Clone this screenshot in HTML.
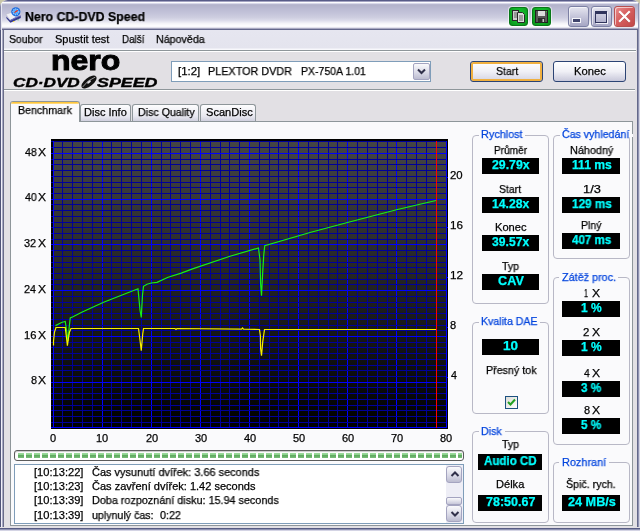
<!DOCTYPE html><html><head><meta charset="utf-8"><title>Nero CD-DVD Speed</title><style>
*{box-sizing:border-box;margin:0;padding:0}
html,body{width:640px;height:531px;overflow:hidden;background:#e2e0e4}
body{font-family:"Liberation Sans",sans-serif;font-size:11px;color:#000;position:relative}
.abs{position:absolute}
.t{position:absolute;white-space:nowrap;line-height:1;transform-origin:0 0;will-change:transform;-webkit-text-stroke:0.25px}
.grp{position:absolute;border:1px solid #b8b8c6;border-radius:4px}
.gbg{position:absolute;background:#fafafc;height:3px}
.vb{position:absolute;background:#000;height:16px}
</style></head><body>
<div class="abs" style="left:0;top:0;width:640px;height:10px;background:#c9c6a8"></div>
<div class="abs" style="left:0;top:0;width:640px;height:531px;border-radius:7px 7px 0 0;overflow:hidden;background:#e2e0e4">
<div class="abs" style="left:0;top:0;width:640px;height:30px;background:linear-gradient(to bottom,#585c88 0.5px,#a4a4c2 1.5px,#fcfcff 2.5px,#dadaea 3.5px,#b8b8d0 4.5px,#b4b4cc 5.5px,#bcbcd4 9.5px,#c4c4da 13.5px,#ceceE0 17.5px,#dcdcea 20.5px,#f4f4f8 23.5px,#fcfcfe 25.5px,#fafafc 26.5px,#e4e4ee 27.5px,#a8a8c0 28.5px,#64688c 29.5px);border-radius:8px 8px 0 0"></div>
<div class="abs" style="left:0;top:3px;width:2px;height:27px;background:linear-gradient(to right,#8688a8 0,#8688a8 1px,#e8e8f2 1px)"></div>
<div class="abs" style="left:638px;top:3px;width:2px;height:27px;background:linear-gradient(to left,#d4d4e4 0,#d4d4e4 1px,#9094b2 1px)"></div>
<div class="abs" style="left:0;top:30px;width:4px;height:501px;background:linear-gradient(to right,#505478 0,#505478 1px,#f0f0f8 1px,#f0f0f8 2px,#a8a8c4 2px,#a8a8c4 3px,#686c88 3px)"></div>
<div class="abs" style="left:636px;top:30px;width:4px;height:501px;background:linear-gradient(to left,#d4d4e4 0,#d4d4e4 1px,#9094b2 1px,#9094b2 2px,#64688a 2px,#64688a 3px,#e2e0e4 3px)"></div>
<div class="abs" style="left:0;top:527px;width:640px;height:4px;background:linear-gradient(to top,#d4d4e4 0,#d4d4e4 1px,#9094b2 1px,#9094b2 2px,#585c84 2px,#585c84 3px,#e2e0e4 3px)"></div>
</div>
<svg class="abs" style="left:4px;top:5px" width="20" height="20" viewBox="4 5 20 20"><path d="M6 14.2 L11.5 12.4 L16.5 16.8 L10 20.2 Z" fill="#f0f0f6" stroke="#b8b8c8" stroke-width=".5"/><path d="M6.2 16.4 L10 20.3 L20.6 15.6 L20.8 18 L10.4 22.8 L6.6 18.6 Z" fill="#34388c"/><path d="M10 20.2 L16.5 16.8 L20.6 15.4 L20.6 16 L10.2 21 Z" fill="#6a70c0"/><circle cx="15.8" cy="11.8" r="4.6" fill="#1c6ce0"/><circle cx="15.8" cy="11.8" r="3" fill="#58a8f8"/><circle cx="15.8" cy="11.8" r="3" fill="none" stroke="#d8ecff" stroke-width=".9" stroke-dasharray="1 1.2"/><path d="M14.6 12.6 L17.8 10.6 L16 11 Z" fill="#f03018" stroke="#f03018" stroke-width=".8"/><rect x="13" y="21" width="1.3" height="1" fill="#e8d020"/><rect x="17.6" y="19.4" width="1" height=".9" fill="#30b040"/></svg>
<div class="t" style="left:25.26px;top:10.92px;font-size:12.5px;transform:scaleX(0.9875);font-weight:bold;">Nero CD-DVD Speed</div>
<div class="abs" style="left:509px;top:7px;width:19px;height:19px;border:1px solid #087818;border-radius:3px;background:radial-gradient(ellipse at 50% 40%,#18c830 0,#10b028 55%,#0a8c18 100%);box-shadow:0 0 0 1px rgba(255,255,255,.55)"><svg class="abs" style="left:-1px;top:-1px" width="19" height="19" viewBox="509 7 19 19"><rect x="512.5" y="10.5" width="6" height="10" fill="#cfcfcf" stroke="#282828" stroke-width="1"/><path d="M514 13h3M514 15h3M514 17h3" stroke="#606060" stroke-width="1"/><path d="M517.5 12.5 h5 l2 2 v8 h-7 z" fill="#dcdcdc" stroke="#282828" stroke-width="1"/><path d="M519 16h4M519 18h4M519 20h4" stroke="#606060" stroke-width="1"/></svg></div>
<div class="abs" style="left:532px;top:7px;width:19px;height:19px;border:1px solid #087818;border-radius:3px;background:radial-gradient(ellipse at 50% 40%,#18c830 0,#10b028 55%,#0a8c18 100%);box-shadow:0 0 0 1px rgba(255,255,255,.55)"><svg class="abs" style="left:-1px;top:-1px" width="19" height="19" viewBox="532 7 19 19"><rect x="535.5" y="10.5" width="12" height="12" fill="#585858" stroke="#202020" stroke-width="1"/><rect x="538" y="11" width="7" height="5" fill="#dcdcdc"/><rect x="538" y="18" width="7" height="4.5" fill="#2c2c2c"/><rect x="542.5" y="19" width="1.6" height="3" fill="#c8c8c8"/><rect x="546" y="11.2" width="1" height="1" fill="#30e030"/></svg></div>
<div class="abs" style="left:568px;top:6px;width:21px;height:21px;border:1px solid #7c80a4;border-radius:3px;background:linear-gradient(to bottom,#e6e6f0 0,#c8c8dc 45%,#a6a6c4 100%);box-shadow:inset 1px 1px 0 rgba(255,255,255,.6)"><div class="abs" style="left:3px;top:11px;width:9px;height:5px;background:#40446c;border:1px solid #f4f4fa"></div></div>
<div class="abs" style="left:591px;top:6px;width:21px;height:21px;border:1px solid #7c80a4;border-radius:3px;background:linear-gradient(to bottom,#e6e6f0 0,#c8c8dc 45%,#a6a6c4 100%);box-shadow:inset 1px 1px 0 rgba(255,255,255,.6)"><div class="abs" style="left:3px;top:4px;width:12px;height:12px;border:1px solid #30345c;border-top-width:3px;box-shadow:1px 1px 0 #f0f0f8"></div></div>
<div class="abs" style="left:614px;top:6px;width:21px;height:21px;border:1px solid #b85050;border-radius:3px;background:linear-gradient(135deg,#e89090 0,#d86060 45%,#c04848 100%);box-shadow:inset 1px 1px 0 rgba(255,255,255,.6)"><svg class="abs" style="left:0;top:0" width="19" height="19"><path d="M5.5 6 L13.5 14 M13.5 6 L5.5 14" stroke="#702020" stroke-width="2.2" stroke-linecap="square" opacity=".5"/><path d="M5 5 L14 14 M14 5 L5 14" stroke="#fff" stroke-width="2.2" stroke-linecap="square"/></svg></div>
<div class="abs" style="left:4px;top:30px;width:632px;height:20px;background:linear-gradient(to bottom,#e6e6f0 0,#e4e4ee 18px,#f8f8fc 19px)"></div>
<div class="abs" style="left:4px;top:50px;width:632px;height:1px;background:#8e969a"></div>
<div class="abs" style="left:4px;top:51px;width:632px;height:1px;background:#fff"></div>
<div class="t" style="left:9.28px;top:33.69px;font-size:11px;transform:scaleX(0.9496);">Soubor</div>
<div class="t" style="left:55.40px;top:33.69px;font-size:11px;transform:scaleX(0.9986);">Spustit test</div>
<div class="t" style="left:122.12px;top:33.69px;font-size:11px;transform:scaleX(0.8948);">Další</div>
<div class="t" style="left:156.35px;top:33.69px;font-size:11px;transform:scaleX(0.9706);">Nápověda</div>
<div class="abs" style="left:4px;top:89px;width:631px;height:1px;background:#8e969a"></div>
<div class="abs" style="left:4px;top:90px;width:631px;height:1px;background:#fff"></div>
<div class="t" style="left:51.20px;top:46.90px;font-size:28px;transform:scaleX(1.1414);font-weight:bold;-webkit-text-stroke:1px #000;">nero</div>
<div class="t" style="left:13.18px;top:76.20px;font-size:13px;transform:scaleX(1.3199);font-weight:bold;font-style:italic;-webkit-text-stroke:0.4px #000;">CD·DVD</div>
<div class="t" style="left:97.33px;top:76.20px;font-size:13px;transform:scaleX(1.3714);font-weight:bold;font-style:italic;-webkit-text-stroke:0.4px #000;">SPEED</div>
<svg class="abs" style="left:80px;top:74px" width="18" height="16" viewBox="0 0 18 16"><g transform="rotate(-38 9 8)"><ellipse cx="9" cy="8" rx="9" ry="4.2" fill="#111"/><ellipse cx="9" cy="8" rx="2.2" ry="1" fill="#e2e0e4"/><path d="M1 8 Q9 5.5 17 8" stroke="#e2e0e4" stroke-width=".6" fill="none"/></g></svg>
<div class="abs" style="left:171px;top:61px;width:260px;height:21px;border:1px solid #7f9db9;background:#fff"></div>
<div class="t" style="left:177.97px;top:66.19px;font-size:11px;transform:scaleX(1.0375);">[1:2]</div>
<div class="t" style="left:207.89px;top:66.19px;font-size:11px;transform:scaleX(0.9821);">PLEXTOR DVDR</div>
<div class="t" style="left:301.16px;top:66.19px;font-size:11px;transform:scaleX(0.9549);">PX-750A 1.01</div>
<div class="abs" style="left:413px;top:63px;width:17px;height:17px;border:1px solid #a4a4c0;border-radius:2px;background:linear-gradient(to bottom,#fafafc,#d8d8e6 60%,#bcbcd0)"><svg width="15" height="15"><path d="M4 5.5 L7.5 9 L11 5.5" fill="none" stroke="#30304a" stroke-width="2"/></svg></div>
<div class="abs" style="left:470px;top:61px;width:73px;height:21px;border:1px solid #2c4474;border-radius:3px;background:linear-gradient(to bottom,#fff,#f0f0f6 50%,#d4d4e2);box-shadow:inset 0 0 0 2px #f0b040"></div>
<div class="t" style="left:495.52px;top:66.29px;font-size:11px;transform:scaleX(0.9547);">Start</div>
<div class="abs" style="left:553px;top:61px;width:73px;height:21px;border:1px solid #2c4474;border-radius:3px;background:linear-gradient(to bottom,#fff,#f0f0f6 50%,#c8c8da)"></div>
<div class="t" style="left:573.81px;top:66.29px;font-size:11px;transform:scaleX(1.0191);">Konec</div>
<div class="abs" style="left:10px;top:121px;width:623px;height:405px;border:1px solid #8e969a;background:#fafafc"></div>
<div class="abs" style="left:80px;top:104px;width:51px;height:17px;border:1px solid #8e969a;border-bottom:0;border-radius:3px 3px 0 0;background:linear-gradient(to bottom,#fdfdfe,#e8e8f0 70%,#d0d0de)"></div>
<div class="abs" style="left:132px;top:104px;width:67px;height:17px;border:1px solid #8e969a;border-bottom:0;border-radius:3px 3px 0 0;background:linear-gradient(to bottom,#fdfdfe,#e8e8f0 70%,#d0d0de)"></div>
<div class="abs" style="left:200px;top:104px;width:56px;height:17px;border:1px solid #8e969a;border-bottom:0;border-radius:3px 3px 0 0;background:linear-gradient(to bottom,#fdfdfe,#e8e8f0 70%,#d0d0de)"></div>
<div class="abs" style="left:10px;top:101px;width:70px;height:21px;border:1px solid #8e969a;border-bottom:0;border-radius:3px 3px 0 0;background:#fafafc;overflow:hidden"><div class="abs" style="left:0;top:-1px;width:100%;height:3px;background:linear-gradient(to bottom,#e68b2c 0,#e68b2c 1px,#ffc73c 1px,#ffc73c 2px,#ffd878 2px)"></div></div>
<div class="t" style="left:17.75px;top:105.19px;font-size:11px;transform:scaleX(0.9686);">Benchmark</div>
<div class="t" style="left:84.03px;top:107.49px;font-size:11px;transform:scaleX(1.0000);">Disc Info</div>
<div class="t" style="left:137.75px;top:107.49px;font-size:11px;transform:scaleX(0.9662);">Disc Quality</div>
<div class="t" style="left:205.90px;top:107.49px;font-size:11px;transform:scaleX(1.0055);">ScanDisc</div>
<svg width="398" height="291" viewBox="51 139 398 291" style="position:absolute;left:51px;top:139px">
<defs><linearGradient id="bg" x1="0" y1="0" x2="0" y2="1"><stop offset="0" stop-color="#454545"/><stop offset="1" stop-color="#000000"/></linearGradient></defs>
<rect x="51" y="139" width="397" height="290" fill="#000"/>
<rect x="53" y="141" width="394" height="287" fill="url(#bg)"/>
<g shape-rendering="crispEdges">
<rect x="53" y="141" width="1" height="287" fill="#0000ff"/>
<rect x="62" y="141" width="1" height="287" fill="#00009a"/>
<rect x="72" y="141" width="1" height="287" fill="#00009a"/>
<rect x="82" y="141" width="1" height="287" fill="#00009a"/>
<rect x="92" y="141" width="1" height="287" fill="#00009a"/>
<rect x="102" y="141" width="1" height="287" fill="#0000ff"/>
<rect x="111" y="141" width="1" height="287" fill="#00009a"/>
<rect x="121" y="141" width="1" height="287" fill="#00009a"/>
<rect x="131" y="141" width="1" height="287" fill="#00009a"/>
<rect x="141" y="141" width="1" height="287" fill="#00009a"/>
<rect x="151" y="141" width="1" height="287" fill="#0000ff"/>
<rect x="161" y="141" width="1" height="287" fill="#00009a"/>
<rect x="170" y="141" width="1" height="287" fill="#00009a"/>
<rect x="180" y="141" width="1" height="287" fill="#00009a"/>
<rect x="190" y="141" width="1" height="287" fill="#00009a"/>
<rect x="200" y="141" width="1" height="287" fill="#0000ff"/>
<rect x="210" y="141" width="1" height="287" fill="#00009a"/>
<rect x="220" y="141" width="1" height="287" fill="#00009a"/>
<rect x="229" y="141" width="1" height="287" fill="#00009a"/>
<rect x="239" y="141" width="1" height="287" fill="#00009a"/>
<rect x="249" y="141" width="1" height="287" fill="#0000ff"/>
<rect x="259" y="141" width="1" height="287" fill="#00009a"/>
<rect x="269" y="141" width="1" height="287" fill="#00009a"/>
<rect x="278" y="141" width="1" height="287" fill="#00009a"/>
<rect x="288" y="141" width="1" height="287" fill="#00009a"/>
<rect x="298" y="141" width="1" height="287" fill="#0000ff"/>
<rect x="308" y="141" width="1" height="287" fill="#00009a"/>
<rect x="318" y="141" width="1" height="287" fill="#00009a"/>
<rect x="328" y="141" width="1" height="287" fill="#00009a"/>
<rect x="337" y="141" width="1" height="287" fill="#00009a"/>
<rect x="347" y="141" width="1" height="287" fill="#0000ff"/>
<rect x="357" y="141" width="1" height="287" fill="#00009a"/>
<rect x="367" y="141" width="1" height="287" fill="#00009a"/>
<rect x="377" y="141" width="1" height="287" fill="#00009a"/>
<rect x="387" y="141" width="1" height="287" fill="#00009a"/>
<rect x="396" y="141" width="1" height="287" fill="#0000ff"/>
<rect x="406" y="141" width="1" height="287" fill="#00009a"/>
<rect x="416" y="141" width="1" height="287" fill="#00009a"/>
<rect x="426" y="141" width="1" height="287" fill="#00009a"/>
<rect x="436" y="141" width="1" height="287" fill="#00009a"/>
<rect x="446" y="141" width="1" height="287" fill="#0000ff"/>
<rect x="51" y="427" width="396" height="1" fill="#0000ff"/>
<rect x="51" y="422" width="396" height="1" fill="#00009a"/>
<rect x="51" y="416" width="396" height="1" fill="#00009a"/>
<rect x="51" y="410" width="396" height="1" fill="#00009a"/>
<rect x="51" y="405" width="396" height="1" fill="#00009a"/>
<rect x="51" y="399" width="396" height="1" fill="#00009a"/>
<rect x="51" y="393" width="396" height="1" fill="#00009a"/>
<rect x="51" y="387" width="396" height="1" fill="#00009a"/>
<rect x="51" y="382" width="396" height="1" fill="#0000ff"/>
<rect x="51" y="376" width="396" height="1" fill="#00009a"/>
<rect x="51" y="370" width="396" height="1" fill="#00009a"/>
<rect x="51" y="365" width="396" height="1" fill="#00009a"/>
<rect x="51" y="359" width="396" height="1" fill="#00009a"/>
<rect x="51" y="353" width="396" height="1" fill="#00009a"/>
<rect x="51" y="347" width="396" height="1" fill="#00009a"/>
<rect x="51" y="342" width="396" height="1" fill="#00009a"/>
<rect x="51" y="336" width="396" height="1" fill="#0000ff"/>
<rect x="51" y="330" width="396" height="1" fill="#00009a"/>
<rect x="51" y="325" width="396" height="1" fill="#00009a"/>
<rect x="51" y="319" width="396" height="1" fill="#00009a"/>
<rect x="51" y="313" width="396" height="1" fill="#00009a"/>
<rect x="51" y="307" width="396" height="1" fill="#00009a"/>
<rect x="51" y="302" width="396" height="1" fill="#00009a"/>
<rect x="51" y="296" width="396" height="1" fill="#00009a"/>
<rect x="51" y="290" width="396" height="1" fill="#0000ff"/>
<rect x="51" y="284" width="396" height="1" fill="#00009a"/>
<rect x="51" y="279" width="396" height="1" fill="#00009a"/>
<rect x="51" y="273" width="396" height="1" fill="#00009a"/>
<rect x="51" y="267" width="396" height="1" fill="#00009a"/>
<rect x="51" y="262" width="396" height="1" fill="#00009a"/>
<rect x="51" y="256" width="396" height="1" fill="#00009a"/>
<rect x="51" y="250" width="396" height="1" fill="#00009a"/>
<rect x="51" y="244" width="396" height="1" fill="#0000ff"/>
<rect x="51" y="239" width="396" height="1" fill="#00009a"/>
<rect x="51" y="233" width="396" height="1" fill="#00009a"/>
<rect x="51" y="227" width="396" height="1" fill="#00009a"/>
<rect x="51" y="222" width="396" height="1" fill="#00009a"/>
<rect x="51" y="216" width="396" height="1" fill="#00009a"/>
<rect x="51" y="210" width="396" height="1" fill="#00009a"/>
<rect x="51" y="204" width="396" height="1" fill="#00009a"/>
<rect x="51" y="199" width="396" height="1" fill="#0000ff"/>
<rect x="51" y="193" width="396" height="1" fill="#00009a"/>
<rect x="51" y="187" width="396" height="1" fill="#00009a"/>
<rect x="51" y="182" width="396" height="1" fill="#00009a"/>
<rect x="51" y="176" width="396" height="1" fill="#00009a"/>
<rect x="51" y="170" width="396" height="1" fill="#00009a"/>
<rect x="51" y="164" width="396" height="1" fill="#00009a"/>
<rect x="51" y="159" width="396" height="1" fill="#00009a"/>
<rect x="51" y="153" width="396" height="1" fill="#0000ff"/>
<rect x="51" y="147" width="396" height="1" fill="#00009a"/>
<rect x="51" y="141" width="396" height="1" fill="#00009a"/>
<rect x="53" y="141" width="1" height="287" fill="#0000ff"/>
<rect x="446" y="141" width="1" height="287" fill="#0000ff"/>
<rect x="51" y="427" width="396" height="1" fill="#0000ff"/>
<rect x="447" y="377" width="1" height="1" fill="#0000ff"/>
<rect x="447" y="327" width="1" height="1" fill="#0000ff"/>
<rect x="447" y="277" width="1" height="1" fill="#0000ff"/>
<rect x="447" y="227" width="1" height="1" fill="#0000ff"/>
<rect x="447" y="177" width="1" height="1" fill="#0000ff"/>
<rect x="448" y="139" width="1" height="291" fill="#ffffff"/>
<rect x="51" y="429" width="398" height="1" fill="#ffffff"/>
<rect x="436" y="141" width="1" height="287" fill="#ff0000"/>
</g>
<polyline fill="none" stroke="#18f018" stroke-width="1.2" points="55.5,325.6 61.5,322.5 65.25,321.5 66.5,330 68,341 69.2,327 70.25,318 73,316.8 81.75,312.25 103,302.5 110,299.75 138,288.75 140,310 141.25,317.5 142.5,295 143.5,286.25 147,284.3 151.25,283 157,282.3 168.1,277.3 181.25,273.1 192.5,268.9 230,256.25 258.5,248 260,260 260.6,283.75 261.5,295.6 262.75,271.25 263.75,255 264.75,245.6 310,232.5 347.5,222.5 397.5,209.5 436,200.5"/>
<polyline fill="none" stroke="#f8f000" stroke-width="1.2" points="53.5,345.6 53.5,341 54.5,332 56,327.5 65.25,327.5 66.3,336 67.4,345.6 68.5,338 69.5,332 71,328.5 138.5,328.5 140,340 141.25,350.6 142.75,333.75 143.5,328.5 175,328.5 176,329.5 177,328.5 241.5,329.2 242.5,328 243.5,329.2 259.5,329.5 260.4,336 260.6,348.5 261.5,355.75 262.75,341.6 263.75,334.75 264.5,329.5 436,329.5"/>
</svg>
<div class="t" style="left:24.56px;top:146.53px;font-size:11px;transform:scaleX(0.9720);">48</div>
<div class="t" style="left:38.48px;top:146.53px;font-size:11px;transform:scaleX(1.0982);">X</div>
<div class="t" style="left:24.56px;top:192.29px;font-size:11px;transform:scaleX(0.9720);">40</div>
<div class="t" style="left:38.48px;top:192.29px;font-size:11px;transform:scaleX(1.0982);">X</div>
<div class="t" style="left:24.43px;top:238.05px;font-size:11px;transform:scaleX(0.9934);">32</div>
<div class="t" style="left:38.48px;top:238.05px;font-size:11px;transform:scaleX(1.0982);">X</div>
<div class="t" style="left:24.31px;top:283.81px;font-size:11px;transform:scaleX(0.9826);">24</div>
<div class="t" style="left:38.48px;top:283.81px;font-size:11px;transform:scaleX(1.0982);">X</div>
<div class="t" style="left:24.04px;top:329.57px;font-size:11px;transform:scaleX(1.0157);">16</div>
<div class="t" style="left:38.48px;top:329.57px;font-size:11px;transform:scaleX(1.0982);">X</div>
<div class="t" style="left:30.54px;top:375.33px;font-size:11px;transform:scaleX(0.9674);">8</div>
<div class="t" style="left:38.48px;top:375.33px;font-size:11px;transform:scaleX(1.0982);">X</div>
<div class="t" style="left:449.98px;top:170.19px;font-size:11px;transform:scaleX(1.0330);">20</div>
<div class="t" style="left:449.71px;top:220.19px;font-size:11px;transform:scaleX(1.0562);">16</div>
<div class="t" style="left:449.70px;top:270.19px;font-size:11px;transform:scaleX(1.0682);">12</div>
<div class="t" style="left:450.42px;top:320.19px;font-size:11px;transform:scaleX(1.0047);">8</div>
<div class="t" style="left:450.56px;top:370.19px;font-size:11px;transform:scaleX(0.9600);">4</div>
<div class="t" style="left:50.44px;top:433.29px;font-size:11px;transform:scaleX(1.0000);">0</div>
<div class="t" style="left:96.31px;top:433.29px;font-size:11px;transform:scaleX(1.0000);">10</div>
<div class="t" style="left:145.56px;top:433.29px;font-size:11px;transform:scaleX(1.0000);">20</div>
<div class="t" style="left:194.75px;top:433.29px;font-size:11px;transform:scaleX(1.0000);">30</div>
<div class="t" style="left:243.94px;top:433.29px;font-size:11px;transform:scaleX(1.0000);">40</div>
<div class="t" style="left:293.00px;top:433.29px;font-size:11px;transform:scaleX(1.0000);">50</div>
<div class="t" style="left:342.06px;top:433.29px;font-size:11px;transform:scaleX(1.0000);">60</div>
<div class="t" style="left:391.19px;top:433.29px;font-size:11px;transform:scaleX(1.0000);">70</div>
<div class="t" style="left:440.38px;top:433.29px;font-size:11px;transform:scaleX(1.0000);">80</div>
<div class="abs" style="left:14px;top:450px;width:450px;height:11px;border:1px solid #5c5c5c;border-radius:3px;background:#fff;box-shadow:inset 0 1px 1px #c8c8c8"></div>
<div class="abs" style="left:18px;top:453px;width:444px;height:5px;background:repeating-linear-gradient(to right,transparent 0,transparent 6px,#fff 6px,#fff 8px),linear-gradient(to bottom,#9cdc9c 0,#8cd08c 38%,#5ca85c 42%,#68b068 70%,#7cc07c 100%)"></div>
<div class="abs" style="left:14px;top:464px;width:450px;height:60px;border:1px solid #7f9db9;background:#fff"></div>
<div class="t" style="left:33.74px;top:466.99px;font-size:11px;transform:scaleX(1.0105);">[10:13:22]</div>
<div class="t" style="left:92.00px;top:466.99px;font-size:11px;transform:scaleX(0.9955);">Čas vysunutí dvířek: 3.66 seconds</div>
<div class="t" style="left:33.74px;top:481.24px;font-size:11px;transform:scaleX(1.0105);">[10:13:23]</div>
<div class="t" style="left:92.00px;top:481.24px;font-size:11px;transform:scaleX(1.0008);">Čas zavření dvířek: 1.42 seconds</div>
<div class="t" style="left:33.74px;top:495.49px;font-size:11px;transform:scaleX(1.0105);">[10:13:39]</div>
<div class="t" style="left:91.64px;top:495.49px;font-size:11px;transform:scaleX(0.9821);">Doba rozpoznání disku: 15.94 seconds</div>
<div class="t" style="left:33.74px;top:509.69px;font-size:11px;transform:scaleX(1.0105);">[10:13:39]</div>
<div class="t" style="left:91.90px;top:509.69px;font-size:11px;transform:scaleX(0.9677);">uplynulý čas:</div>
<div class="t" style="left:159.63px;top:509.69px;font-size:11px;transform:scaleX(0.9756);">0:22</div>
<div class="abs" style="left:446px;top:465px;width:17px;height:58px;background:#eeeef6"></div>
<div class="abs" style="left:446px;top:466px;width:16px;height:17px;border:1px solid #a4a4c0;border-radius:3px;background:linear-gradient(to bottom,#fafafc,#d8d8e6 60%,#bcbcd0)"><svg width="14" height="15"><path d="M4.5 9 L8 5.5 L11.5 9" fill="none" stroke="#30304a" stroke-width="2"/></svg></div>
<div class="abs" style="left:446px;top:505px;width:16px;height:17px;border:1px solid #a4a4c0;border-radius:3px;background:linear-gradient(to bottom,#fafafc,#d8d8e6 60%,#bcbcd0)"><svg width="14" height="15"><path d="M4.5 6 L8 9.5 L11.5 6" fill="none" stroke="#30304a" stroke-width="2"/></svg></div>
<div class="abs" style="left:446px;top:497px;width:16px;height:8px;border:1px solid #a4a4c0;border-radius:2px;background:linear-gradient(to bottom,#fafafc,#c8c8da)"></div>
<div class="grp" style="left:472px;top:135px;width:77px;height:169px"></div><div class="gbg" style="left:478.8px;top:134px;width:46.69999999999999px"></div><div class="t" style="left:480.94px;top:129.19px;font-size:11px;transform:scaleX(0.9867);color:#0044dd;">Rychlost</div>
<div class="grp" style="left:553px;top:135px;width:77px;height:124px"></div><div class="gbg" style="left:559.8px;top:134px;width:72.80000000000007px"></div><div class="t" style="left:562.32px;top:129.49px;font-size:11px;transform:scaleX(0.9646);color:#0044dd;">Čas vyhledání</div>
<div class="grp" style="left:553px;top:277px;width:77px;height:168px"></div><div class="gbg" style="left:558.8px;top:276px;width:59.0px"></div><div class="t" style="left:561.55px;top:272.49px;font-size:11px;transform:scaleX(0.9838);color:#0044dd;">Zátěž proc.</div>
<div class="grp" style="left:472px;top:322px;width:77px;height:92px"></div><div class="gbg" style="left:478.8px;top:321px;width:61.30000000000001px"></div><div class="t" style="left:480.96px;top:316.29px;font-size:11px;transform:scaleX(0.9638);color:#0044dd;">Kvalita DAE</div>
<div class="grp" style="left:472px;top:431px;width:77px;height:92px"></div><div class="gbg" style="left:478.8px;top:430px;width:25.899999999999977px"></div><div class="t" style="left:480.96px;top:426.49px;font-size:11px;transform:scaleX(0.9648);color:#0044dd;">Disk</div>
<div class="grp" style="left:553px;top:462px;width:77px;height:61px"></div><div class="gbg" style="left:559.4px;top:461px;width:49.39999999999998px"></div><div class="t" style="left:561.53px;top:457.09px;font-size:11px;transform:scaleX(0.9892);color:#0044dd;">Rozhraní</div>
<div class="t" style="left:494.10px;top:145.09px;font-size:11px;transform:scaleX(0.9171);">Průměr</div>
<div class="vb" style="left:482px;top:158px;width:57px"></div><div class="t" style="left:491.52px;top:158.94px;font-size:12px;transform:scaleX(1.0262);font-weight:bold;color:#00ffff;">29.79x</div>
<div class="t" style="left:499.43px;top:183.99px;font-size:11px;transform:scaleX(0.9459);">Start</div>
<div class="vb" style="left:482px;top:197px;width:57px"></div><div class="t" style="left:491.84px;top:197.94px;font-size:12px;transform:scaleX(1.0174);font-weight:bold;color:#00ffff;">14.28x</div>
<div class="t" style="left:494.77px;top:222.19px;font-size:11px;transform:scaleX(1.0108);">Konec</div>
<div class="vb" style="left:482px;top:235px;width:57px"></div><div class="t" style="left:492.05px;top:235.94px;font-size:12px;transform:scaleX(1.0117);font-weight:bold;color:#00ffff;">39.57x</div>
<div class="t" style="left:502.28px;top:261.19px;font-size:11px;transform:scaleX(0.9623);">Typ</div>
<div class="vb" style="left:482px;top:274px;width:57px"></div><div class="t" style="left:497.60px;top:274.94px;font-size:12px;transform:scaleX(1.0570);font-weight:bold;color:#00ffff;">CAV</div>
<div class="t" style="left:569.94px;top:145.09px;font-size:11px;transform:scaleX(0.9855);">Náhodný</div>
<div class="vb" style="left:562px;top:158px;width:58px"></div><div class="t" style="left:571.54px;top:158.94px;font-size:12px;transform:scaleX(1.0118);font-weight:bold;color:#00ffff;">111 ms</div>
<div class="t" style="left:583.12px;top:184.19px;font-size:11px;transform:scaleX(1.1681);">1/3</div>
<div class="vb" style="left:562px;top:197px;width:58px"></div><div class="t" style="left:571.57px;top:197.94px;font-size:12px;transform:scaleX(0.9797);font-weight:bold;color:#00ffff;">129 ms</div>
<div class="t" style="left:580.86px;top:220.19px;font-size:11px;transform:scaleX(0.9561);">Plný</div>
<div class="vb" style="left:562px;top:233px;width:58px"></div><div class="t" style="left:572.18px;top:233.94px;font-size:12px;transform:scaleX(0.9645);font-weight:bold;color:#00ffff;">407 ms</div>
<div class="t" style="left:584.12px;top:288.09px;font-size:11px;transform:scaleX(0.6359);">1</div>
<div class="t" style="left:591.62px;top:288.09px;font-size:11px;transform:scaleX(1.1055);">X</div>
<div class="t" style="left:583.38px;top:327.09px;font-size:11px;transform:scaleX(1.0341);">2</div>
<div class="t" style="left:591.62px;top:327.09px;font-size:11px;transform:scaleX(1.1055);">X</div>
<div class="t" style="left:583.66px;top:368.19px;font-size:11px;transform:scaleX(0.9422);">4</div>
<div class="t" style="left:591.62px;top:368.19px;font-size:11px;transform:scaleX(1.1055);">X</div>
<div class="t" style="left:583.53px;top:405.39px;font-size:11px;transform:scaleX(0.9860);">8</div>
<div class="t" style="left:591.62px;top:405.39px;font-size:11px;transform:scaleX(1.1055);">X</div>
<div class="vb" style="left:562px;top:301px;width:58px"></div><div class="t" style="left:580.95px;top:301.94px;font-size:12px;transform:scaleX(0.9987);font-weight:bold;color:#00ffff;">1 %</div>
<div class="vb" style="left:562px;top:340px;width:58px"></div><div class="t" style="left:580.95px;top:340.94px;font-size:12px;transform:scaleX(0.9987);font-weight:bold;color:#00ffff;">1 %</div>
<div class="vb" style="left:562px;top:381px;width:58px"></div><div class="t" style="left:581.46px;top:381.94px;font-size:12px;transform:scaleX(0.9739);font-weight:bold;color:#00ffff;">3 %</div>
<div class="vb" style="left:562px;top:418px;width:58px"></div><div class="t" style="left:581.46px;top:418.94px;font-size:12px;transform:scaleX(0.9739);font-weight:bold;color:#00ffff;">5 %</div>
<div class="vb" style="left:482px;top:339px;width:57px"></div><div class="t" style="left:503.06px;top:339.94px;font-size:12px;transform:scaleX(1.1216);font-weight:bold;color:#00ffff;">10</div>
<div class="t" style="left:486.05px;top:365.29px;font-size:11px;transform:scaleX(0.9737);">Přesný tok</div>
<div class="abs" style="left:505px;top:396px;width:13px;height:13px;border:1px solid #1c5180;background:linear-gradient(135deg,#dcdcd7,#fff)"><svg width="11" height="11"><path d="M2 5 L4.5 7.5 L9 2.5" fill="none" stroke="#21a121" stroke-width="2"/></svg></div>
<div class="t" style="left:502.28px;top:439.29px;font-size:11px;transform:scaleX(0.9623);">Typ</div>
<div class="vb" style="left:478px;top:454px;width:64px"></div><div class="t" style="left:484.06px;top:454.94px;font-size:12px;transform:scaleX(0.9630);font-weight:bold;color:#00ffff;">Audio CD</div>
<div class="t" style="left:496.02px;top:478.59px;font-size:11px;transform:scaleX(1.0055);">Délka</div>
<div class="vb" style="left:478px;top:495px;width:64px"></div><div class="t" style="left:485.78px;top:495.94px;font-size:12px;transform:scaleX(1.0430);font-weight:bold;color:#00ffff;">78:50.67</div>
<div class="t" style="left:566.12px;top:478.59px;font-size:11px;transform:scaleX(0.9664);">Špič. rych.</div>
<div class="vb" style="left:562px;top:495px;width:58px"></div><div class="t" style="left:567.70px;top:495.94px;font-size:12px;transform:scaleX(1.0562);font-weight:bold;color:#00ffff;">24 MB/s</div>
</body></html>
